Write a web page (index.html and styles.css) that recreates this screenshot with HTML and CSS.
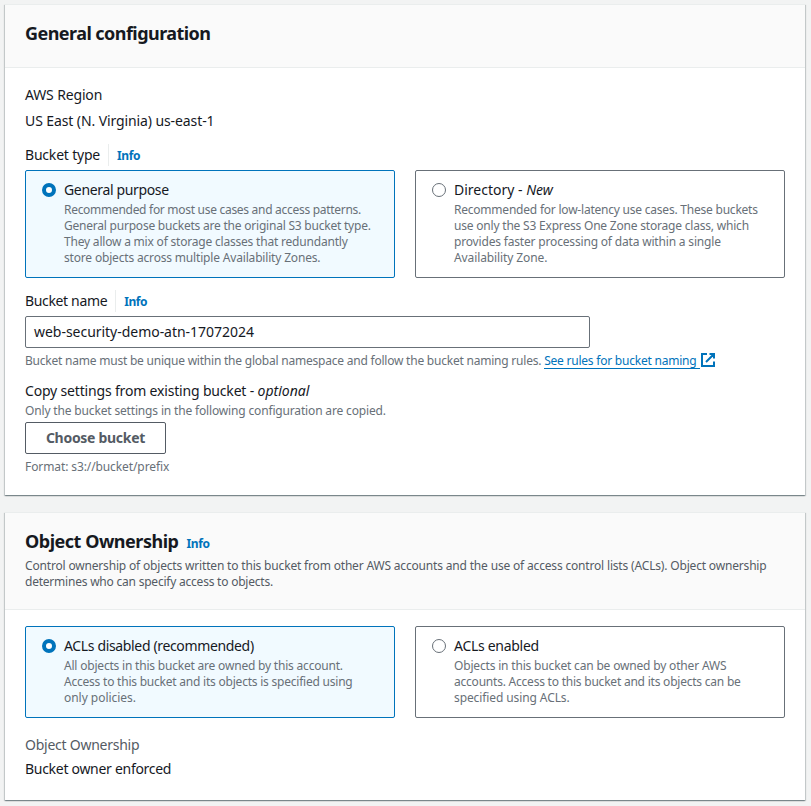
FILE: index.html
```html
<!DOCTYPE html>
<html lang="en">
<head>
<meta charset="utf-8">
<title>Create bucket</title>
<link rel="stylesheet" href="styles.css">
</head>
<body>
<main class="page">
  <section class="card">
    <header class="card-header"><h2><span class="h-general">General configuration</span></h2></header>
    <div class="card-body">
      <div class="line"><span class="ls-15">AWS Region</span></div>
      <div class="line region-value"><span class="ls-10">US East (N. Virginia) us-east-1</span></div>
      <div class="line field-label gap-12"><span class="ls-20">Bucket type</span><a class="info divided">Info</a></div>
      <div class="tiles">
        <label class="tile selected">
          <span class="radio"></span>
          <span class="tile-text">
            <span class="tile-title ls-35">General purpose</span>
            <span class="small"><span class="ls-29">Recommended for most use cases and access patterns.</span><br><span class="ls-22">General purpose buckets are the original S3 bucket type.</span><br><span class="ls-20">They allow a mix of storage classes that redundantly</span><br><span class="ls-18">store objects across multiple Availability Zones.</span></span>
          </span>
        </label>
        <label class="tile">
          <span class="radio"></span>
          <span class="tile-text">
            <span class="tile-title">Directory - <i>New</i></span>
            <span class="small"><span class="ls-22">Recommended for low-latency use cases. These buckets</span><br><span class="ls-20">use only the S3 Express One Zone storage class, which</span><br><span class="ls-18">provides faster processing of data within a single</span><br><span class="ls-10">Availability Zone.</span></span>
          </span>
        </label>
      </div>
      <div class="line field-label gap-12"><span class="ls-35">Bucket name</span><a class="info divided">Info</a></div>
      <div class="input"><span class="ls-3">web-security-demo-atn-17072024</span></div>
      <div class="small hint"><span class="ls-22">Bucket name must be unique within the global namespace and follow the bucket naming rules. </span><a class="link ls-22">See rules for bucket naming</a><svg class="external" viewBox="0 0 16 16"><path d="M7 2H2v12h12V9.500M9.500 2H14v4.500M6 10l8-8"/></svg></div>
      <div class="line copy-label"><span class="ls-18">Copy settings from existing bucket - </span><i>optional</i></div>
      <div class="small copy-desc ls-16">Only the bucket settings in the following configuration are copied.</div>
      <button class="button"><span class="ls-29">Choose bucket</span></button>
      <div class="small format ls-10">Format: s3://bucket/prefix</div>
    </div>
  </section>

  <section class="card ownership">
    <header class="card-header">
      <h2><span class="h-owner">Object Ownership</span><a class="info">Info</a></h2>
      <p class="small description"><span class="ls-18">Control ownership of objects written to this bucket from other AWS accounts and the use of access control lists (ACLs). Object ownership</span><br><span class="ls-22">determines who can specify access to objects.</span></p>
    </header>
    <div class="card-body">
      <div class="tiles">
        <label class="tile selected">
          <span class="radio"></span>
          <span class="tile-text">
            <span class="tile-title ls-35">ACLs disabled (recommended)</span>
            <span class="small"><span class="ls-20">All objects in this bucket are owned by this account.</span><br><span class="ls-22">Access to this bucket and its objects is specified using</span><br><span class="ls-3">only policies.</span></span>
          </span>
        </label>
        <label class="tile">
          <span class="radio"></span>
          <span class="tile-text">
            <span class="tile-title ls-29">ACLs enabled</span>
            <span class="small"><span class="ls-18">Objects in this bucket can be owned by other AWS</span><br><span class="ls-22">accounts. Access to this bucket and its objects can be</span><br><span class="ls-10">specified using ACLs.</span></span>
          </span>
        </label>
      </div>
      <div class="line muted owner-label"><span class="ls-25">Object Ownership</span></div>
      <div class="line owner-value"><span class="ls-29">Bucket owner enforced</span></div>
    </div>
  </section>
</main>
</body>
</html>
```
FILE: styles.css
```css
* { box-sizing: border-box; }
body {
  margin: 0;
  background: #f2f3f3;
  color: #16191f;
  font: 14px/22px "Noto Sans", "Open Sans", sans-serif;
  white-space: nowrap;
}
.page {
  display: flex;
  flex-direction: column;
  gap: 17px;
  padding: 4px 6px 0 5px;
  height: 806px;
  overflow: hidden;
}
.card {
  height: 491px;
  flex: none;
  background: #fff;
  box-shadow: 0 1px 1px 0 rgba(0,28,36,.3), 1px 1px 1px 0 rgba(0,28,36,.15), -1px 1px 1px 0 rgba(0,28,36,.15);
}
.card.ownership { height: 288px; }
.card-header {
  height: 64px;
  padding: 17px 20px 0;
  background: #fafafa;
  border-top: 1px solid #eaeded;
  border-bottom: 1px solid #eaeded;
}
.ownership .card-header { height: 98px; }
h2 {
  display: flex;
  align-items: baseline;
  margin: 0;
  font-size: 18px;
  line-height: 22px;
  font-weight: 700;
}
.h-general { letter-spacing: -.55px; }
.h-owner { letter-spacing: -.48px; }

/* Tracking steps, in hundredths of a pixel */
.ls-3 { letter-spacing: -.03px; }
.ls-10 { letter-spacing: -.1px; }
.ls-15 { letter-spacing: -.15px; }
.ls-16 { letter-spacing: -.16px; }
.ls-18 { letter-spacing: -.175px; }
.ls-20 { letter-spacing: -.2px; }
.ls-22 { letter-spacing: -.22px; }
.ls-25 { letter-spacing: -.25px; }
.ls-29 { letter-spacing: -.29px; }
.ls-35 { letter-spacing: -.35px; }

.card-body { padding: 16px 20px 0; }
.line { height: 22px; }
.region-value { margin-top: 4px; }
.gap-12 { margin-top: 12px; }
.field-label { display: flex; margin-bottom: 4px; }
.info {
  color: #0073bb;
  font-size: 12px;
  line-height: 23px;
  font-weight: 700;
  letter-spacing: -.4px;
}
.info.divided { margin-left: 8px; padding-left: 8px; border-left: 1px solid #eaeded; }
h2 .info { margin-left: 8px; }
.tiles { display: grid; grid-template-columns: 370px 370px; gap: 20px; }
.tile {
  display: flex;
  height: 108px;
  padding: 8px 15px;
  border: 1px solid #687078;
  border-radius: 2px;
}
.ownership .tile { height: 92px; }
.tile.selected { border-color: #0073bb; background: #f1faff; }
.radio {
  flex: none;
  width: 14px;
  height: 14px;
  margin: 4px 8px 0 1px;
  border: 1px solid #687078;
  border-radius: 50%;
  background: #fff;
}
.selected .radio { border: 4px solid #0073bb; }
.tile-text, .tile-title, .tile-text .small { display: block; }
.tile-text .small { margin-top: 1px; }
.small { font-size: 12px; line-height: 16px; color: #687078; }
.input {
  width: 565px;
  height: 32px;
  padding: 4px 8px;
  border: 1px solid #687078;
  border-radius: 2px;
}
.hint { display: flex; height: 16px; margin-top: 5px; }
.hint span { white-space: pre; }
.link { height: 16px; padding-right: 4px; border-bottom: 1px solid #0073bb; color: #0073bb; }
.external { width: 16px; height: 16px; margin-top: -1px; fill: none; stroke: #0073bb; stroke-width: 2; }
.copy-label { margin-top: 11px; }
.copy-desc { margin-top: 1px; }
.button {
  display: block;
  width: 141px;
  height: 32px;
  margin-top: 3px;
  padding: 0;
  border: 1px solid #545b64;
  border-radius: 2px;
  background: #fff;
  color: #545b64;
  font: 700 14px/22px "Noto Sans", sans-serif;
}
.format { margin-top: 5px; }
.description { margin: 3px 0 0; color: #545b64; }
.muted { color: #545b64; }
.owner-label { margin-top: 16px; }
.owner-value { margin-top: 2px; }
```
